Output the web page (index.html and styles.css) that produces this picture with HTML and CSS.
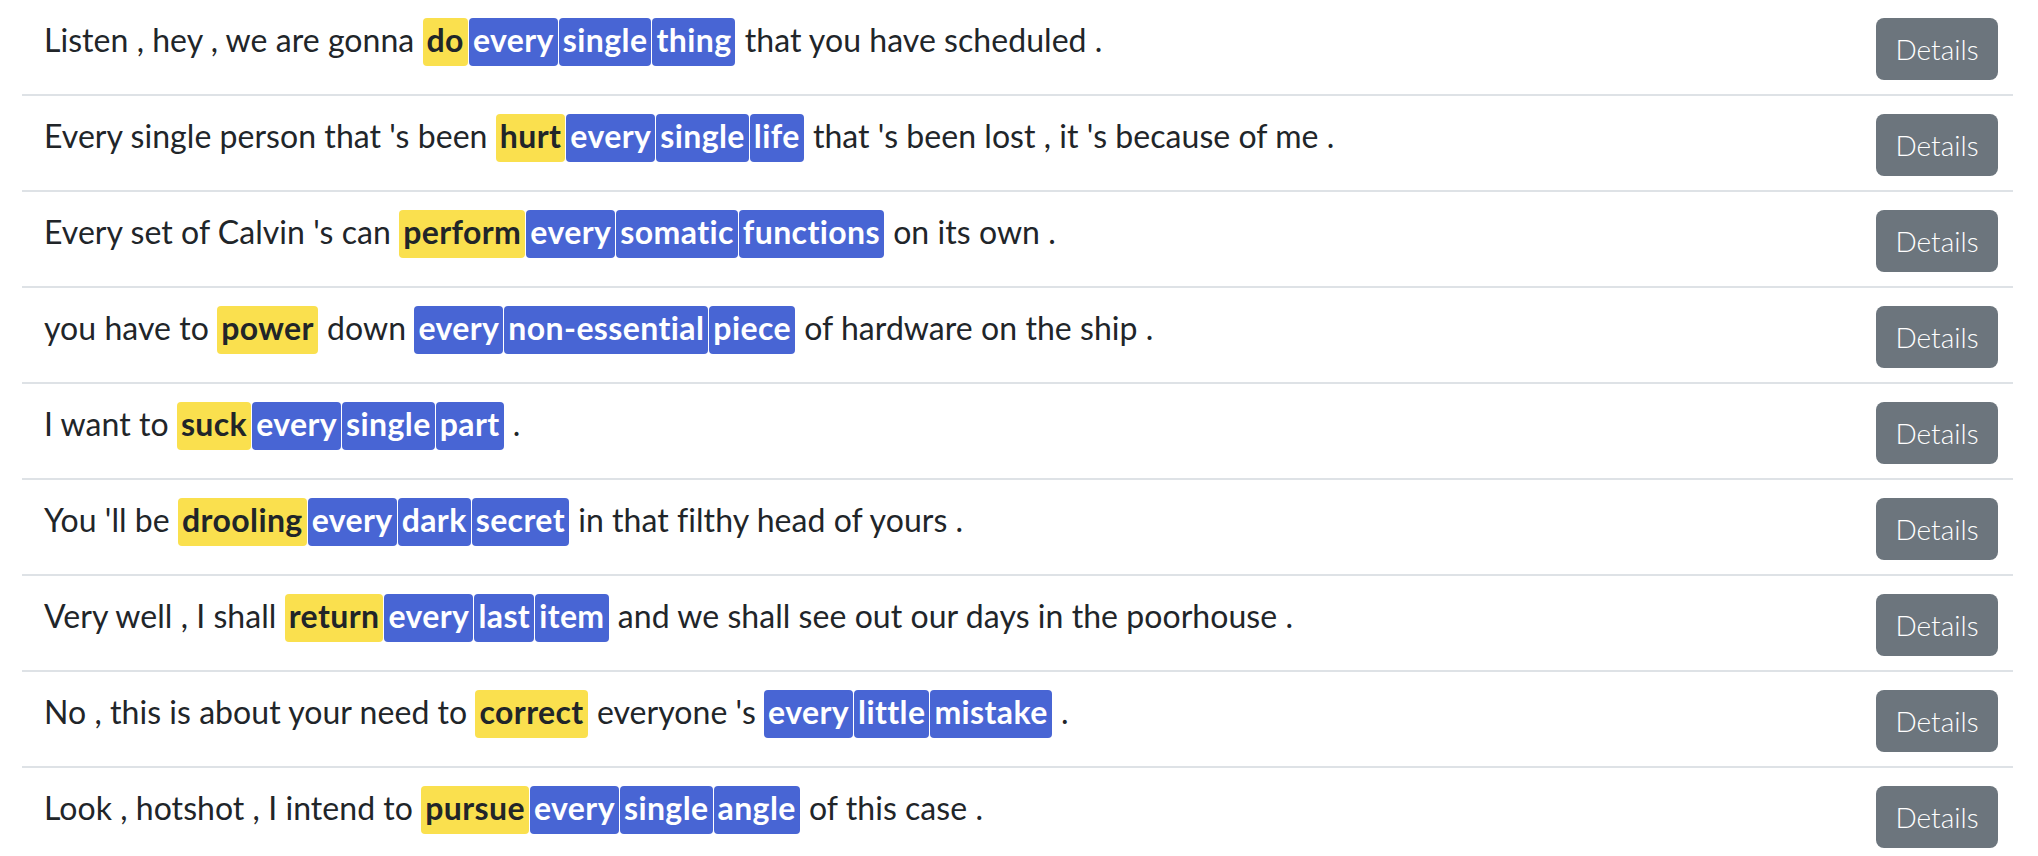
FILE: index.html
```html
<!DOCTYPE html>
<html lang="en">

<head>
  <meta charset="UTF-8">
  <meta name="viewport" content="width=device-width, initial-scale=1.0">
  <title>Sentences</title>

  <link rel="stylesheet" href="styles.css">
</head>

<body>
  <ul class="sentence-list">
    <li class="sentence-row">
      <div class="sentence">Listen , hey , we are gonna <span class="hl-verb">do</span><span class="hl-obj">every</span><span class="hl-obj">single</span><span class="hl-obj">thing</span> that you have scheduled .</div>
      <button class="btn-details">Details</button>
    </li>
    <li class="sentence-row">
      <div class="sentence">Every single person that 's been <span class="hl-verb">hurt</span><span class="hl-obj">every</span><span class="hl-obj">single</span><span class="hl-obj">life</span> that 's been lost , it 's because of me .</div>
      <button class="btn-details">Details</button>
    </li>
    <li class="sentence-row">
      <div class="sentence">Every set of Calvin 's can <span class="hl-verb">perform</span><span class="hl-obj">every</span><span class="hl-obj">somatic</span><span class="hl-obj">functions</span> on its own .</div>
      <button class="btn-details">Details</button>
    </li>
    <li class="sentence-row">
      <div class="sentence">you have to <span class="hl-verb">power</span> down <span class="hl-obj">every</span><span class="hl-obj">non-essential</span><span class="hl-obj">piece</span> of hardware on the ship .</div>
      <button class="btn-details">Details</button>
    </li>
    <li class="sentence-row">
      <div class="sentence">I want to <span class="hl-verb">suck</span><span class="hl-obj">every</span><span class="hl-obj">single</span><span class="hl-obj">part</span> .</div>
      <button class="btn-details">Details</button>
    </li>
    <li class="sentence-row">
      <div class="sentence">You 'll be <span class="hl-verb">drooling</span><span class="hl-obj">every</span><span class="hl-obj">dark</span><span class="hl-obj">secret</span> in that filthy head of yours .</div>
      <button class="btn-details">Details</button>
    </li>
    <li class="sentence-row">
      <div class="sentence">Very well , I shall <span class="hl-verb">return</span><span class="hl-obj">every</span><span class="hl-obj">last</span><span class="hl-obj">item</span> and we shall see out our days in the poorhouse .</div>
      <button class="btn-details">Details</button>
    </li>
    <li class="sentence-row">
      <div class="sentence">No , this is about your need to <span class="hl-verb">correct</span> everyone 's <span class="hl-obj">every</span><span class="hl-obj">little</span><span class="hl-obj">mistake</span> .</div>
      <button class="btn-details">Details</button>
    </li>
    <li class="sentence-row">
      <div class="sentence">Look , hotshot , I intend to <span class="hl-verb">pursue</span><span class="hl-obj">every</span><span class="hl-obj">single</span><span class="hl-obj">angle</span> of this case .</div>
      <button class="btn-details">Details</button>
    </li>
  </ul>
</body>

</html>
```

FILE: styles.css
```css
body {
  margin: 0;
  background: #ffffff;
  color: #212529;
  font-family: Lato, "Liberation Sans", sans-serif;
}

/* 列表 */
.sentence-list {
  list-style: none;
  margin: 0 25px 0 22px;
  padding: 0;
}

.sentence-row {
  display: flex;
  align-items: flex-start;
  justify-content: space-between;
  height: 96px;
  padding: 18px 15px 0 22px;
  box-sizing: border-box;
  border-bottom: 2px solid #dee2e6;
}

.sentence {
  margin-top: -2px;
  font-size: 32px;
  line-height: 48px;
  font-weight: 400;
  letter-spacing: 0.05px;
  white-space: nowrap;
}

/* 高亮 */
.hl-verb,
.hl-obj {
  display: inline-block;
  padding: 0 4px 4px;
  margin-right: 1px;
  line-height: 44px;
  border-radius: 4px;
  font-weight: 700;
  letter-spacing: 0.4px;
}

.hl-verb {
  background: #fae04e;
  color: #212529;
}

.hl-obj {
  background: #4865d4;
  color: #ffffff;
}

/* 按钮 */
.btn-details {
  flex: none;
  width: 122px;
  height: 62px;
  padding: 0;
  border: none;
  border-radius: 8px;
  background: #6c757d;
  color: #ffffff;
  font-family: Lato, "Liberation Sans", sans-serif;
  font-size: 28px;
  font-weight: 300;
}
```
